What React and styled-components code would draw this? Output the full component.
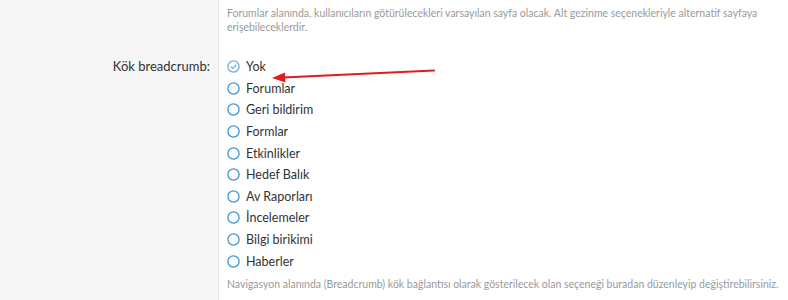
import React from "react";
import styled, { createGlobalStyle } from "styled-components";

const GlobalStyle = createGlobalStyle`
  body {
    margin: 0;
    background: #ffffff;
    font-family: Lato, "Open Sans", sans-serif;
  }
`;

const options = [
  "Yok",
  "Forumlar",
  "Geri bildirim",
  "Formlar",
  "Etkinlikler",
  "Hedef Balık",
  "Av Raporları",
  "İncelemeler",
  "Bilgi birikimi",
  "Haberler",
];

const RadioIcon = ({ checked }) => (
  <svg width="13" height="13" viewBox="0 0 13 13">
    <circle
      cx="6.5"
      cy="6.5"
      r="5.6"
      fill="none"
      stroke={checked ? "#6aaee0" : "#3d95d4"}
      strokeWidth="1.3"
    />
    {checked && (
      <path d="M3.9 6.6 L5.8 8.4 L9.2 4.7" fill="none" stroke="#6aaee0" strokeWidth="1.3" />
    )}
  </svg>
);

const App = () => {
  return (
    <>
      <GlobalStyle />
      <Page>
        <Row>
          <Label />
          <Field>
            <Hint>
              Forumlar alanında, kullanıcıların götürülecekleri varsayılan sayfa olacak. Alt gezinme seçenekleriyle alternatif sayfaya erişebileceklerdir.
            </Hint>
          </Field>
        </Row>
        <Row>
          <Label>Kök breadcrumb:</Label>
          <Field $top>
            <List>
              {options.map((o, i) => (
                <Option key={o}>
                  <RadioIcon checked={i === 0} />
                  <span>{o}</span>
                </Option>
              ))}
            </List>
            <Hint $bottom>
              Navigasyon alanında (Breadcrumb) kök bağlantısı olarak gösterilecek olan seçeneği buradan düzenleyip değiştirebilirsiniz.
            </Hint>
          </Field>
        </Row>
        <Arrow width="170" height="16" viewBox="0 0 170 16">
          <path d="M163 3.5 L12 10.5" stroke="#e31b1b" strokeWidth="2.2" strokeLinecap="round" />
          <path d="M1 11 L14 5.6 L14.5 15.5 Z" fill="#e31b1b" />
        </Arrow>
      </Page>
    </>
  );
};

export default App;

const Page = styled.div`
  position: relative;
  width: 788px;
  height: 300px;
  overflow: hidden;
`;

const Row = styled.div`
  display: grid;
  grid-template-columns: 219px 1fr;
`;

const Label = styled.div`
  background: #f6f6f6;
  border-right: 1px solid #e6e6e6;
  text-align: right;
  padding: 22px 8px 0 0;
  line-height: 21.6px;
  font-size: 13px;
  color: #333333;
  &:empty {
    padding: 0;
  }
`;

const Field = styled.div`
  padding: ${(p) => (p.$top ? "22px 0 20px 8px" : "6px 0 0 8px")};
`;

const Hint = styled.div`
  font-size: 10.5px;
  line-height: 14px;
  color: #9a9a9a;
  padding-top: ${(p) => (p.$bottom ? "5px" : "0")};
  white-space: ${(p) => (p.$bottom ? "nowrap" : "normal")};
  max-width: 556px;
`;

const List = styled.div`
  display: flex;
  flex-direction: column;
`;

const Option = styled.label`
  display: flex;
  align-items: center;
  gap: 6px;
  height: 21.6px;
  font-size: 12.5px;
  color: #333333;
  & svg {
    flex: none;
  }
`;

const Arrow = styled.svg`
  position: absolute;
  left: 271px;
  top: 67px;
`;
